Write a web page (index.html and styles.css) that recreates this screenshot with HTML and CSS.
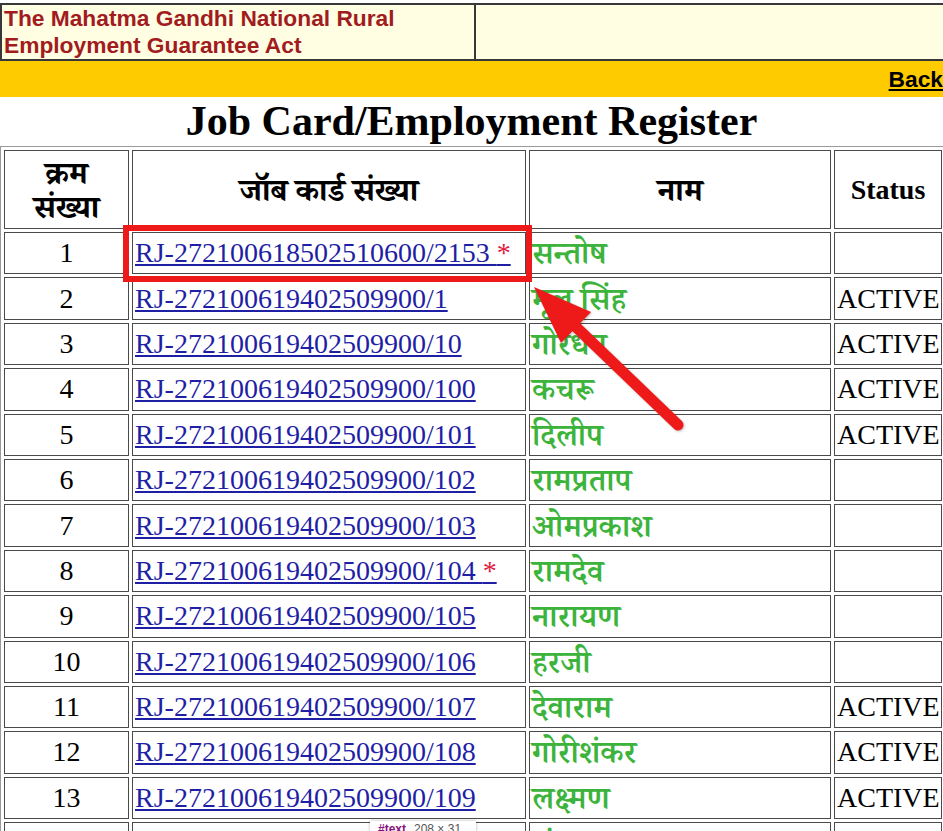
FILE: index.html
```html
<!DOCTYPE html>
<html lang="hi">
<head>
  <meta charset="UTF-8">
  <meta name="viewport" content="width=device-width, initial-scale=1.0">
  <title>Job Card/Employment Register</title>
  <link rel="stylesheet" href="styles.css">
</head>
<body>
  <div class="page">
    <div class="top-strip"></div>

    <!-- masthead -->
    <div class="mast">
      <div class="mast-title">The Mahatma Gandhi National Rural<br>Employment Guarantee Act</div>
      <div class="mast-right"></div>
    </div>
    <div class="navbar"><a href="#" class="back">Back</a></div>

    <h1 class="title">Job Card/Employment Register</h1>

    <table class="register">
      <colgroup>
        <col class="c-sno">
        <col class="c-card">
        <col class="c-name">
        <col class="c-status">
      </colgroup>
      <tr class="head">
        <th class="hi">क्रम<br>संख्या</th>
        <th class="hi">जॉब कार्ड संख्या</th>
        <th class="hi">नाम</th>
        <th>Status</th>
      </tr>
      <tr><td class="sno">1</td><td><a href="#">RJ-272100618502510600/2153 <span class="star">*</span></a></td><td class="name">सन्तोष</td><td></td></tr>
      <tr><td class="sno">2</td><td><a href="#">RJ-272100619402509900/1</a></td><td class="name">मूल सिंह</td><td>ACTIVE</td></tr>
      <tr><td class="sno">3</td><td><a href="#">RJ-272100619402509900/10</a></td><td class="name">गोरधन</td><td>ACTIVE</td></tr>
      <tr><td class="sno">4</td><td><a href="#">RJ-272100619402509900/100</a></td><td class="name">कचरू</td><td>ACTIVE</td></tr>
      <tr><td class="sno">5</td><td><a href="#">RJ-272100619402509900/101</a></td><td class="name">दिलीप</td><td>ACTIVE</td></tr>
      <tr><td class="sno">6</td><td><a href="#">RJ-272100619402509900/102</a></td><td class="name">रामप्रताप</td><td></td></tr>
      <tr><td class="sno">7</td><td><a href="#">RJ-272100619402509900/103</a></td><td class="name">ओमप्रकाश</td><td></td></tr>
      <tr><td class="sno">8</td><td><a href="#">RJ-272100619402509900/104 <span class="star">*</span></a></td><td class="name">रामदेव</td><td></td></tr>
      <tr><td class="sno">9</td><td><a href="#">RJ-272100619402509900/105</a></td><td class="name">नारायण</td><td></td></tr>
      <tr><td class="sno">10</td><td><a href="#">RJ-272100619402509900/106</a></td><td class="name">हरजी</td><td></td></tr>
      <tr><td class="sno">11</td><td><a href="#">RJ-272100619402509900/107</a></td><td class="name">देवाराम</td><td>ACTIVE</td></tr>
      <tr><td class="sno">12</td><td><a href="#">RJ-272100619402509900/108</a></td><td class="name">गोरीशंकर</td><td>ACTIVE</td></tr>
      <tr><td class="sno">13</td><td><a href="#">RJ-272100619402509900/109</a></td><td class="name">लक्ष्मण</td><td>ACTIVE</td></tr>
      <tr><td class="sno">14</td><td><a href="#">RJ-272100619402509900/11</a></td><td class="name">भंवरलाल</td><td>ACTIVE</td></tr>
    </table>

    <!-- annotation: red box + arrow -->
    <div class="highlight"></div>
    <svg class="arrow" width="943" height="831" viewBox="0 0 943 831">
      <line x1="576" y1="327" x2="678" y2="425" stroke="#ee1a1a" stroke-width="11" stroke-linecap="round"/>
      <polygon points="534,287 591,312 561,343" fill="#ee1a1a"/>
    </svg>

    <!-- devtools hover tip -->
    <div class="inspect-tip"><b>#text</b><span>208 × 31</span></div>
  </div>
</body>
</html>
```

FILE: styles.css
```css
html, body {
  margin: 0;
  padding: 0;
  overflow: hidden;
  background: #fff;
}

.page {
  position: relative;
  width: 943px;
  height: 831px;
  overflow: hidden;
  font-family: "Liberation Serif", "Noto Serif Devanagari", "Noto Sans Devanagari", "Lohit Devanagari", serif;
  color: #000;
}

.top-strip {
  height: 3px;
}

.mast {
  display: flex;
  height: 54px;
  background: #fffee2;
  border-top: 2px solid #383838;
  border-bottom: 2px solid #383838;
}

.mast-title {
  width: 468px;
  padding: 0 2px;
  border-left: 2px solid #383838;
  border-right: 2px solid #383838;
  font-family: "Liberation Sans", Arial, sans-serif;
  font-weight: bold;
  font-size: 22.75px;
  line-height: 27px;
  color: #a11b1f;
}

.mast-right {
  flex: 1;
}

.navbar {
  height: 36px;
  background: #fecb00;
  text-align: right;
  line-height: 36px;
}

.back {
  font-family: "Liberation Sans", Arial, sans-serif;
  font-weight: bold;
  font-size: 22.75px;
  color: #000;
}

.title {
  margin: 0;
  height: 49px;
  font-size: 42px;
  line-height: 49px;
  font-weight: bold;
  text-align: center;
}

.register {
  width: 946px;
  table-layout: fixed;
  border-collapse: separate;
  border-spacing: 3px;
  border: 1px solid #9a9a9a;
  font-size: 28px;
}

.c-sno { width: 125px; }
.c-card { width: 394px; }
.c-name { width: 302px; }
.c-status { width: 108px; }

.register th,
.register td {
  border: 1px solid #4a4a4a;
  padding: 0 2px;
  white-space: nowrap;
  overflow: hidden;
  vertical-align: middle;
}

.register td {
  height: 40.4px;
  line-height: 30px;
}

.register tr.head th {
  height: 77px;
}

.register th {
  font-weight: bold;
  line-height: 34px;
}

.register th.hi {
  font-size: 32px;
}

.register td.sno {
  text-align: center;
}

.register a {
  color: #1f1fa6;
}

.star {
  color: #e3193f;
}

.register td.name {
  color: #3cb43c;
  font-size: 32px;
  font-weight: 600;
  line-height: 38px;
}

.highlight {
  position: absolute;
  left: 123px;
  top: 225px;
  width: 409px;
  height: 57px;
  box-sizing: border-box;
  border: 6px solid #ee1a1a;
}

.arrow {
  position: absolute;
  left: 0;
  top: 0;
  pointer-events: none;
  filter: drop-shadow(1px 1px 1px rgba(0, 0, 0, 0.25));
}

.inspect-tip {
  position: absolute;
  left: 370px;
  top: 821px;
  width: 90px;
  height: 20px;
  padding: 1px 8px;
  background: #fff;
  box-shadow: 0 0 3px rgba(0, 0, 0, 0.3);
  font-family: "Liberation Sans", Arial, sans-serif;
  font-size: 12px;
  line-height: 14px;
  color: #555;
}

.inspect-tip b {
  color: #881280;
  margin-right: 8px;
}
```
